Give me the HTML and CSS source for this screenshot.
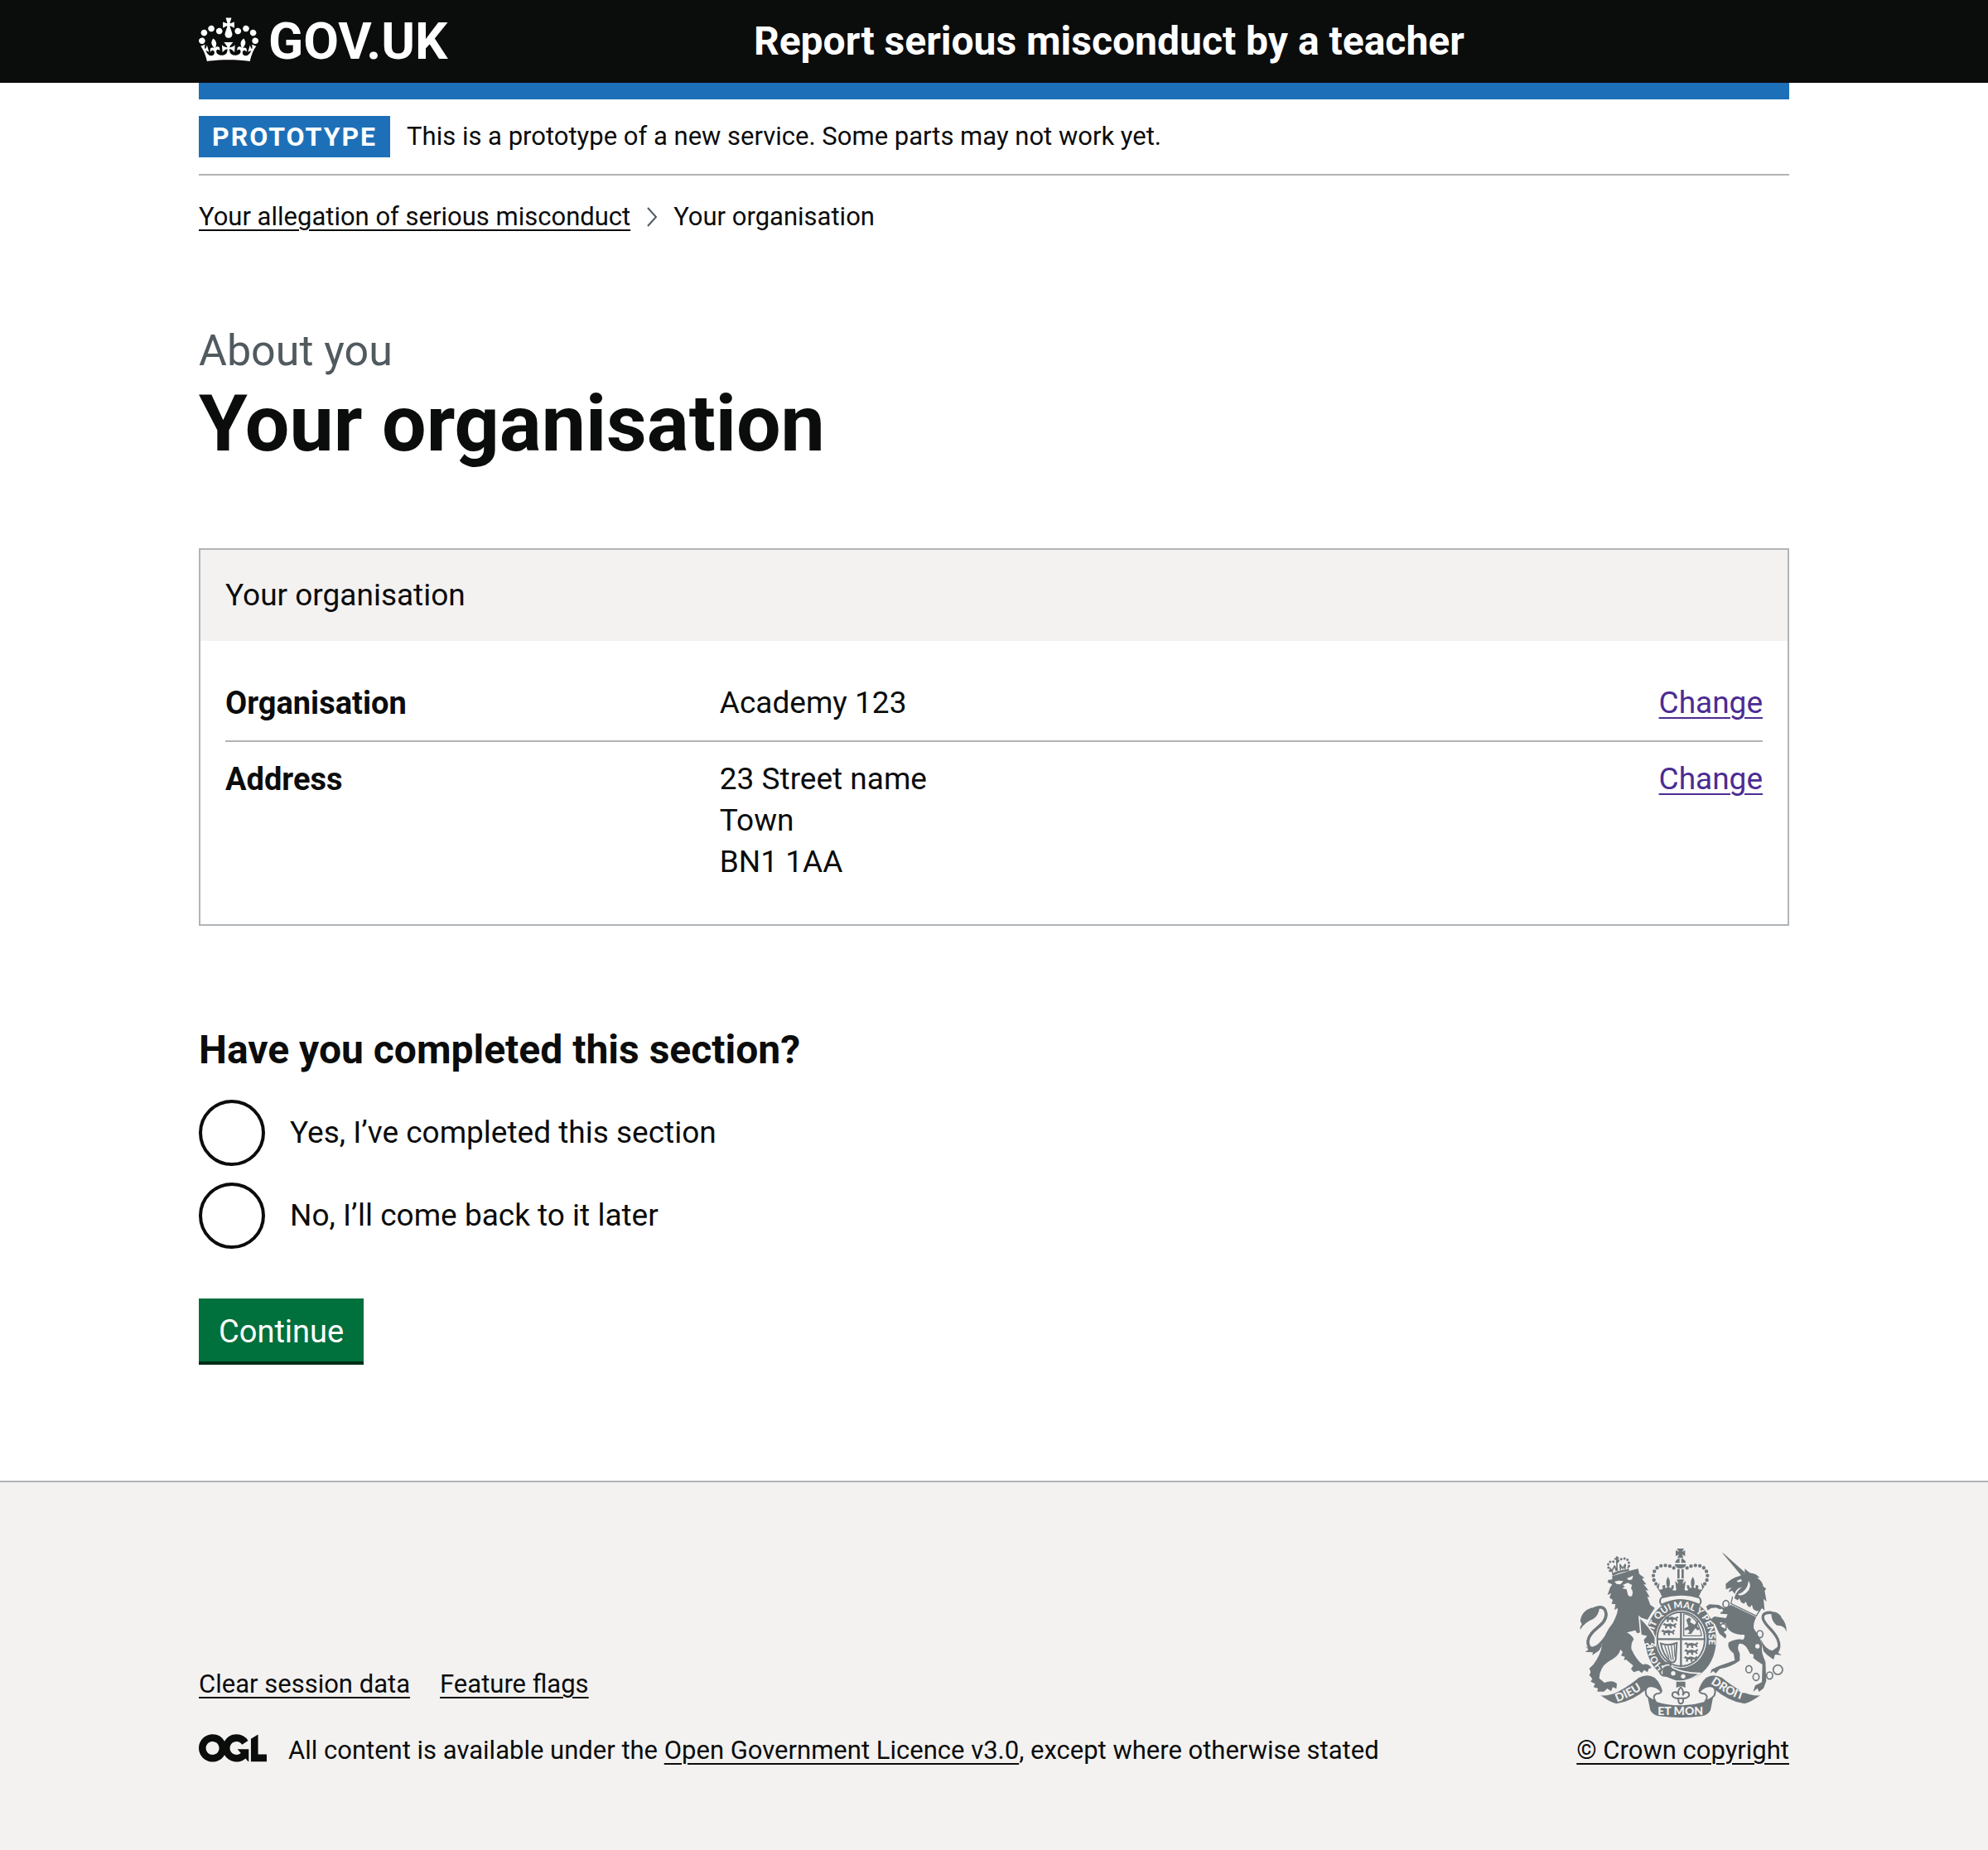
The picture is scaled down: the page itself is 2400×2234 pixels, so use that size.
FILE: index.html
```html
<!DOCTYPE html>
<html lang="en">
<head>
<meta charset="utf-8">
<meta name="viewport" content="width=device-width, initial-scale=1">
<title>Your organisation - Report serious misconduct by a teacher - GOV.UK</title>
<link rel="stylesheet" href="styles.css">
</head>
<body>
<header class="header">
  <div class="header-container container">
    <div class="header-logo">
      <a href="#" class="logo-link">
        <svg class="crown" viewBox="0 0 132 97" aria-hidden="true"><path fill="currentColor" fill-rule="evenodd" d="M25 30.2c3.5 1.5 7.7-.2 9.1-3.7 1.5-3.6-.2-7.8-3.9-9.2-3.6-1.4-7.6.3-9.1 3.9-1.4 3.5.3 7.5 3.9 9zM9 39.5c3.6 1.5 7.8-.2 9.2-3.7 1.5-3.6-.2-7.8-3.9-9.1-3.6-1.5-7.6.2-9.1 3.8-1.4 3.5.3 7.5 3.8 9zM4.4 57.2c3.5 1.5 7.7-.2 9.1-3.8 1.5-3.6-.2-7.7-3.9-9.1-3.5-1.5-7.6.3-9.1 3.8-1.4 3.5.3 7.6 3.9 9.1zm38.3-21.4c3.5 1.5 7.7-.2 9.1-3.8 1.5-3.6-.2-7.7-3.9-9.1-3.6-1.5-7.6.3-9.1 3.8-1.3 3.6.4 7.7 3.9 9.1zm64.4-5.6c-3.6 1.5-7.8-.2-9.1-3.7-1.5-3.6.2-7.8 3.8-9.2 3.6-1.4 7.7.3 9.2 3.9 1.3 3.5-.4 7.5-3.9 9zm15.9 9.3c-3.6 1.5-7.7-.2-9.1-3.7-1.5-3.6.2-7.8 3.7-9.1 3.6-1.5 7.7.2 9.2 3.8 1.5 3.5-.3 7.5-3.8 9zm4.7 17.7c-3.6 1.5-7.8-.2-9.2-3.8-1.5-3.6.2-7.7 3.9-9.1 3.6-1.5 7.7.3 9.2 3.8 1.3 3.5-.4 7.6-3.9 9.1zM89.3 35.8c-3.6 1.5-7.8-.2-9.2-3.8-1.4-3.6.2-7.7 3.9-9.1 3.6-1.5 7.7.3 9.2 3.8 1.4 3.6-.3 7.7-3.9 9.1zM69.7 17.7l8.9 4.7V9.3l-8.9 2.8c-.2-.3-.5-.6-.9-.9L72.4 0H59.6l3.5 11.2c-.3.3-.6.5-.9.9l-8.8-2.8v13.1l8.8-4.7c.3.3.6.7.9.9l-5 15.4v.1c-.2.8-.4 1.6-.4 2.4 0 4.1 3.1 7.5 7 8.1h.2c.3 0 .7.1 1 .1.4 0 .7 0 1-.1h.2c4-.6 7.1-4.1 7.1-8.1 0-.8-.1-1.7-.4-2.4V34l-5.1-15.4c.4-.2.7-.6 1-.9zM66 92.8c16.9 0 32.8 1.1 47.1 3.2 4-16.9 8.9-26.7 14-33.5l-9.6-3.4c1 4.9 1.1 7.2 0 10.2-1.5-1.4-3-4.3-4.2-8.7L108.6 76c2.8-2 5-3.2 7.5-3.3-4.4 9.4-10 11.9-13.6 11.2-4.3-.8-6.3-4.6-5.6-7.9 1-4.7 5.7-5.9 8-.5 4.3-8.7-3-11.4-7.6-8.8 7.1-7.2 7.9-13.5 2.1-21.1-8 6.1-8.1 12.3-4.5 20.8-4.7-5.4-12.1-2.5-9.5 6.2 3.4-5.2 7.9-2 7.2 3.1-.6 4.3-6.4 7.8-13.5 7.2-10.3-.9-10.9-8-11.2-13.8 2.5-.5 7.1 1.8 11 7.3L80.2 60c-4.1 4.4-8 5.3-12.3 5.4 1.4-4.4 8-11.6 8-11.6H55.5s6.4 7.2 7.9 11.6c-4.2-.1-8-1-12.3-5.4l1.4 16.4c3.9-5.5 8.5-7.7 10.9-7.3-.3 5.8-.9 12.8-11.1 13.8-7.2.6-12.9-2.9-13.5-7.2-.7-5 3.8-8.3 7.1-3.1 2.7-8.7-4.6-11.6-9.4-6.2 3.7-8.5 3.6-14.7-4.6-20.8-5.8 7.6-5 13.9 2.2 21.1-4.7-2.6-11.9.1-7.7 8.8 2.3-5.5 7.1-4.2 8.1.5.7 3.3-1.3 7.1-5.7 7.9-3.5.7-9-1.8-13.5-11.2 2.5.1 4.7 1.3 7.5 3.3l-4.7-15.4c-1.2 4.4-2.7 7.2-4.3 8.7-1.1-3-.9-5.3 0-10.2l-9.5 3.4c5 6.9 9.9 16.7 14 33.5 14.8-2.1 30.8-3.2 47.7-3.2z"/></svg>
        <span>GOV.UK</span>
      </a>
    </div>
    <a href="#" class="service-name">Report serious misconduct by a teacher</a>
  </div>
</header>

<div class="container page">
  <div class="phase-banner">
    <strong class="tag">PROTOTYPE</strong>
    <span>This is a prototype of a new service. Some parts may not work yet.</span>
  </div>
  <nav aria-label="Breadcrumb">
    <ol class="breadcrumbs">
      <li><a href="#">Your allegation of serious misconduct</a></li>
      <li>
        <svg class="chevron" viewBox="0 0 14 24" aria-hidden="true"><path d="M1 1l10 11L1 23" fill="none" stroke="currentColor" stroke-width="2"/></svg>
        <span aria-current="page">Your organisation</span>
      </li>
    </ol>
  </nav>

  <main class="main">
    <span class="caption">About you</span>
    <h1 class="heading">Your organisation</h1>

    <section class="card">
      <h2 class="card-title">Your organisation</h2>
      <dl class="summary">
        <div class="row">
          <dt>Organisation</dt>
          <dd class="value">Academy 123</dd>
          <dd><a href="#" class="change" aria-label="Change organisation">Change</a></dd>
        </div>
        <div class="row">
          <dt>Address</dt>
          <dd class="value">23 Street name<br>Town<br>BN1 1AA</dd>
          <dd><a href="#" class="change" aria-label="Change address">Change</a></dd>
        </div>
      </dl>
    </section>

    <form>
      <fieldset class="fieldset">
        <legend>Have you completed this section?</legend>
        <div class="radios">
          <div class="radio">
            <input type="radio" id="completed-yes" name="completed" value="yes">
            <label for="completed-yes">Yes, I’ve completed this section</label>
          </div>
          <div class="radio">
            <input type="radio" id="completed-no" name="completed" value="no">
            <label for="completed-no">No, I’ll come back to it later</label>
          </div>
        </div>
      </fieldset>
      <button type="submit" class="button">Continue</button>
    </form>
  </main>
</div>

<footer class="footer">
  <div class="container footer-container">
    <div class="footer-meta">
      <ul class="footer-links">
        <li><a href="#">Clear session data</a></li>
        <li><a href="#">Feature flags</a></li>
      </ul>
      <div class="licence">
        <svg class="ogl" viewBox="0 0 483 196" aria-hidden="true"><path fill="currentColor" d="M421.5 142.8V.1l-50.7 32.3v161.1h112.4v-50.7zm-122.3-9.6A47.12 47.12 0 0 1 221 97.8c0-26 21.1-47.1 47.1-47.1 16.7 0 31.4 8.7 39.7 21.8l42.7-27.2A97.63 97.63 0 0 0 268.1 0c-36.5 0-68.3 20.1-85.1 49.7A98 98 0 0 0 97.8 0C43.9 0 0 43.9 0 97.8s43.9 97.8 97.8 97.8c36.5 0 68.3-20.1 85.1-49.7a97.76 97.76 0 0 0 149.6 25.4l19.4 22.2h3v-87.8h-80l24.3 27.5zM97.8 145c-26 0-47.1-21.1-47.1-47.1s21.1-47.1 47.1-47.1 47.1 21.1 47.1 47.1S123.8 145 97.8 145"/></svg>
        <span>All content is available under the <a href="#">Open Government Licence v3.0</a>, except where otherwise stated</span>
      </div>
    </div>
    <a href="#" class="copyright">
      <svg class="crest" viewBox="72 60 750 612" aria-hidden="true">
        <defs>
          <path id="garter-text" d="M378 488C352 466 338 432 338 392C338 320 383 276 439 276C495 276 540 320 540 392C540 440 524 480 486 510"/>
          <path id="scroll-left" d="M208 616C255 598 290 578 335 542"/>
          <path id="scroll-right" d="M546 548C590 575 620 600 690 616"/>
          <g id="royal-lion"><path d="M0 8l8-7 6 5 14-3 12 4 8-6 4 5-6 4 4 8-6 1-4-6-8 1 2 8-7 0-2-8-8 0-1 8-7-1 1-10z"/></g>
          <g id="bezant"><ellipse rx="11" ry="13" fill="none" stroke="currentColor" stroke-width="5"/></g>
        </defs>
        <g fill="currentColor">
          <!-- lion -->
          <path d="M190 160L262 138L284 133L288 152L306 166L298 170L314 190L304 190L322 212L311 210L326 236L317 234L328 264L344 275Q332 292 318 318L288 308Q326 342 346 382L346 412L334 404L328 417L318 404L306 408L302 390L312 378L294 374L298 362L280 367L274 356L243 364Q262 374 268 388Q256 406 260 425Q278 464 300 480Q322 474 332 492L322 496L318 508L306 500L297 511L286 502L268 508L258 496L266 484L240 462L232 464L236 452L222 448L228 436L220 425Q215 450 175 470Q145 490 143 530L162 546Q192 534 207 550L205 568L192 562L186 577L172 567L160 578L136 578L138 566L122 562L128 550L112 542L118 532L107 518L112 508L107 494L122 480Q150 440 153 410Q160 370 192 330Q212 292 210 276L198 282L202 262L188 260L192 246L180 238L186 222L173 228L182 202L190 190L173 182L176 173L190 172Z"/>
          <path d="M188 150Q214 138 250 134L252 142Q215 146 192 159Z"/>
          <path d="M192 147L182 130M205 142L199 122M220 138L218 116M236 135L238 116M246 133L252 120M182 132L190 140L198 124L208 137L206 106L208 92M218 118L228 132L238 116" fill="none" stroke="currentColor" stroke-width="5"/>
          <path d="M182 140C168 118 176 102 200 108M212 104C230 90 256 92 250 128" fill="none" stroke="currentColor" stroke-width="9" stroke-linecap="round" stroke-dasharray="0 12"/>
          <path d="M198 98L214 94M206 88L210 112" stroke="currentColor" stroke-width="6"/>
          <path fill="none" stroke="currentColor" stroke-width="11" d="M112 292C125 270 164 260 168 296C170 340 108 352 102 395C100 430 130 435 168 380"/>
          <path d="M74 354Q72 345 80 334L74 322Q78 296 98 282Q122 268 144 276Q140 304 120 316Q92 326 74 354Z"/>
          <path d="M88 408Q100 425 125 418L156 408L142 430L118 446L120 436L92 434L104 426Z"/>
          <path class="paper" d="M198 180L212 176L230 178L220 190L206 188ZM243 168L266 158L262 172L250 175ZM228 192L246 184L262 192L258 204Q268 216 262 230Q254 238 247 228L242 208L226 204L236 198Z"/>

          <!-- crown -->
          <path d="M424 60L450 60L443 72L454 66L454 88L443 81L448 94L426 94L432 81L420 88L420 66L432 72Z"/>
          <path d="M418 112Q420 98 434 95L434 112ZM440 112L440 95Q455 98 457 112ZM416 117L458 117Q454 132 437 132Q420 132 416 117Z"/>
          <path d="M426 134L434 134L434 168L426 168ZM441 134L449 134L449 168L441 168Z"/>
          <path fill="none" stroke="currentColor" stroke-width="13" stroke-linecap="round" stroke-dasharray="0 16" d="M413 130C395 118 350 112 340 150C336 170 345 188 356 194"/>
          <path fill="none" stroke="currentColor" stroke-width="13" stroke-linecap="round" stroke-dasharray="0 16" d="M461 130C479 118 524 112 534 150C538 170 529 188 518 194"/>
          <path d="M350 198L362 184L358 206Q366 212 374 204Q366 192 382 192L382 204L390 200Q380 180 392 162Q404 180 396 200L404 204Q402 192 412 192Q416 202 408 210Q416 214 422 210L418 178L430 188L424 172L450 172L444 188L456 178L452 210Q458 214 466 210Q458 202 462 192Q472 192 470 204L478 200Q470 180 482 162Q494 180 484 200L492 204L492 192Q508 192 500 204Q508 212 516 206L512 184L524 198Q510 216 502 238Q437 218 372 238Q364 216 350 198Z"/>
          <path fill="none" stroke="currentColor" stroke-width="6" d="M368 238Q437 216 506 238Q516 250 506 264Q437 230 368 264Q358 250 368 238Z"/>

          <!-- garter and shield -->
          <path fill-rule="evenodd" d="M439 244A128 148 0 1 1 438 244ZM439 284A92 104 0 1 0 440 284Z"/>
          <ellipse cx="439" cy="388" rx="86" ry="98" fill="none" stroke="currentColor" stroke-width="6"/>
          <path d="M439 290V490M352 388H526" stroke="currentColor" stroke-width="7"/>
          <path fill="none" stroke="currentColor" stroke-width="4" d="M449 296V376H514M449 296Q500 304 514 376"/>
          <path d="M458 318l10-8 8 6-4 10 16 10 8-10-6-6 12 4-4 18 10 10-10 4-6-8-8 10-8 12-14-2 8-6-4-8-14 2 2-8 12-6z"/>
          <use href="#royal-lion" x="378" y="304"/><use href="#royal-lion" x="372" y="328"/><use href="#royal-lion" x="366" y="352"/>
          <use href="#royal-lion" x="450" y="398"/><use href="#royal-lion" x="450" y="423"/><use href="#royal-lion" x="448" y="448"/>
          <path fill="none" stroke="currentColor" stroke-width="6" d="M366 404Q392 414 424 402L420 462Q416 476 400 470Q372 440 366 404Z"/>
          <path fill="none" stroke="currentColor" stroke-width="4" d="M380 412L396 458M392 412L404 464M404 410L411 464M415 408L417 452"/>
          <text class="motto"><textPath href="#garter-text">HONI SOIT QUI MAL Y PENSE</textPath></text>
          <path d="M370 492Q395 470 410 492Q450 512 508 512Q470 544 420 540Q395 532 370 520Z" class="strap"/>
          <circle class="paper" cx="411" cy="512" r="8"/><circle class="paper" cx="447" cy="523" r="8"/>
          <path fill="none" stroke="currentColor" stroke-width="6" d="M392 520Q366 526 362 506Q376 500 362 484Q384 466 402 480Q396 492 406 498"/>
          <path class="outlined" d="M288 308Q326 342 346 382L346 412L334 404L328 417L318 404L306 408L302 390L312 378L294 374Z"/>

          <!-- pendant -->
          <path d="M422 542H455V564L439 558L422 564Z"/>
          <path fill="none" stroke="currentColor" stroke-width="6" d="M438 562Q452 576 445 592Q452 574 466 582Q474 596 456 602H446Q450 622 438 622Q428 622 430 602H420Q402 596 410 582Q424 574 432 592Q424 576 438 562ZM424 602H454"/>

          <!-- unicorn -->
          <path d="M588 75L594 78L672 148L658 158Z"/>
          <path d="M670 150L670 133L688 148Q712 150 724 166L714 166Q736 180 736 196L748 206L742 212L749 252L738 242L742 284L732 276L722 292L632 240Q640 212 660 200Q640 202 634 224L624 212L612 218L616 206L602 208L601 188Q625 166 650 160Z"/>
          <path class="paper" d="M640 178L656 170L660 178L648 182ZM684 176Q698 200 676 220Q655 236 645 226Q680 215 684 176ZM604 206L622 202L618 208Z"/>
          <path d="M620 264L712 308Q698 335 704 352Q732 390 733 415Q728 435 745 470L748 540L738 566L722 579L716 566L700 579L708 556L732 544L734 480Q692 455 688 438Q670 400 650 405Q640 420 652 440L652 466Q620 490 580 496L565 512L556 504L545 512L550 498L575 486L634 465L630 440Q604 420 612 400Q640 385 664 390Q672 382 668 372Q610 372 602 332L580 326L584 342L606 354L594 362L604 374L600 386L578 368L562 334L545 318L560 306L602 312L608 298L582 296L584 282L566 274L548 276L536 284L530 270L542 262L576 264L596 276Z"/>
          <path class="collar" d="M630 236L640 254L650 240L662 266L674 252L684 278L696 264L704 290L722 284L712 304L622 260Z"/>
          <path fill="none" stroke="currentColor" stroke-width="4" d="M626 234L620 259L712 304L724 284"/>
          <path fill="none" stroke="currentColor" stroke-width="10" d="M784 440C810 405 782 370 754 342C724 308 732 290 768 292"/>
          <path d="M760 290Q792 284 804 312Q822 330 821 362L816 350Q806 338 786 338Q768 326 766 298Z"/>
          <path d="M728 388Q745 426 770 430L797 410L786 434L804 446L780 444L774 462L752 446L738 432Z"/>
          <use href="#bezant" x="602" y="261"/><use href="#bezant" x="592" y="345"/><use href="#bezant" x="725" y="370"/>
          <use href="#bezant" x="685" y="497"/><use href="#bezant" x="711" y="525"/><use href="#bezant" x="760" y="520"/>
          <circle cx="790" cy="499" r="17" fill="none" stroke="currentColor" stroke-width="5"/>
          <circle class="paper" cx="716" cy="414" r="8"/><circle class="paper" cx="694" cy="449" r="8"/><circle class="paper" cx="585" cy="284" r="6"/>

          <!-- scroll -->
          <path d="M148 592Q182 594 212 578Q254 556 286 528Q318 512 344 528Q364 546 372 576L362 580Q344 560 318 566Q262 614 205 622Q184 618 148 592Z"/>
          <path d="M726 592Q692 594 662 578Q620 556 588 528Q556 512 530 528Q510 546 502 576L512 580Q530 560 556 566Q612 614 669 622Q690 618 726 592Z"/>
          <path d="M314 575Q320 602 346 614Q437 642 528 614Q554 602 560 575L546 646Q536 664 515 667Q437 677 359 667Q338 664 328 646Z"/>
          <path class="fold" d="M314 592Q304 562 328 558Q350 558 368 578Q364 586 350 586Q334 594 346 612Q326 606 314 592Z"/>
          <path class="fold" d="M560 592Q570 562 546 558Q524 558 506 578Q510 586 524 586Q540 594 528 612Q548 606 560 592Z"/>
          <text class="scroll-text"><textPath href="#scroll-left">DIEU</textPath></text>
          <text class="scroll-text"><textPath href="#scroll-right">DROIT</textPath></text>
          <text class="scroll-text scroll-centre" x="437" y="662">ET MON</text>
        </g>
      </svg>
      <span>© Crown copyright</span>
    </a>
  </div>
</footer>
</body>
</html>
```
FILE: styles.css
```css
:root {
  --black: #0b0c0c;
  --blue: #1d70b8;
  --border: #b1b4b6;
  --grey: #f3f2f1;
  --visited: #4c2c92;
}

* {
  box-sizing: border-box;
}

body {
  margin: 0;
  background: #fff;
  color: var(--black);
  font-family: Roboto, "Liberation Sans", sans-serif;
  font-size: 37px;
  line-height: 50px;
}

.container {
  max-width: 1920px;
  margin: 0 auto;
}

a {
  color: inherit;
  text-decoration: underline;
  text-decoration-thickness: 2px;
  text-underline-offset: 5px;
}

ol,
ul,
dl,
dd {
  margin: 0;
  padding: 0;
  list-style: none;
}

/* Header */
.header {
  background: var(--black);
  color: #fff;
}

.header-container {
  display: flex;
  align-items: center;
  min-height: 100px;
}

.header-logo {
  flex: 0 0 calc(33.33% + 30px);
}

.logo-link {
  display: flex;
  align-items: center;
  gap: 12px;
  font-size: 62px;
  font-weight: 700;
  line-height: 60px;
  text-decoration: none;
}

.crown {
  width: 72px;
  height: 54px;
  margin-bottom: 4px;
}

.service-name {
  font-size: 48px;
  font-weight: 700;
  line-height: 60px;
  text-decoration: none;
}

.page {
  border-top: 20px solid var(--blue);
}

/* Phase banner */
.phase-banner {
  display: flex;
  align-items: center;
  gap: 20px;
  padding: 20px 0;
  border-bottom: 2px solid var(--border);
  font-size: 31px;
}

.tag {
  padding: 0 16px;
  background: var(--blue);
  color: #fff;
  font-size: 32px;
  letter-spacing: 2px;
}

/* Breadcrumbs */
.breadcrumbs {
  display: flex;
  gap: 20px;
  padding-top: 30px;
  font-size: 31px;
  line-height: 40px;
}

.breadcrumbs li {
  display: flex;
  align-items: center;
  gap: 18px;
}

.chevron {
  width: 14px;
  height: 24px;
  color: #505a5f;
}

/* Main */
.main {
  padding: 112px 0 140px;
}

.caption {
  display: block;
  color: #505a5f;
  font-size: 52px;
  line-height: 60px;
}

.heading {
  margin: 8px 0 100px;
  font-size: 95px;
  line-height: 100px;
}

.card {
  margin-bottom: 120px;
  border: 2px solid var(--border);
}

.card-title {
  margin: 0;
  padding: 30px;
  background: var(--grey);
  font-size: 37px;
  font-weight: 400;
}

.summary {
  padding: 30px;
}

.row {
  display: flex;
  padding: 20px 0;
  border-bottom: 2px solid var(--border);
}

.row:last-child {
  border-bottom: 0;
}

.row dt {
  flex: 0 0 calc(30% + 40px);
  font-size: 38px;
  font-weight: 700;
}

.value {
  flex: 1;
}

.change {
  color: var(--visited);
}

.fieldset {
  margin: 0 0 60px;
  padding: 0;
  border: 0;
}

.fieldset legend {
  margin-bottom: 30px;
  padding: 0;
  font-size: 48px;
  font-weight: 700;
  line-height: 60px;
}

.radios {
  display: grid;
  gap: 20px;
}

.radio {
  display: flex;
  align-items: center;
  gap: 30px;
}

.radio input {
  appearance: none;
  width: 80px;
  height: 80px;
  margin: 0;
  border: 4px solid var(--black);
  border-radius: 50%;
  background: #fff;
}

.radio input:checked {
  background: radial-gradient(circle, var(--black) 20px, #fff 21px);
}

.button {
  display: block;
  padding: 15px 24px 11px;
  border: 0;
  border-bottom: 4px solid #002d18;
  background: #00703c;
  color: #fff;
  font: inherit;
  font-size: 38px;
}

/* Footer */
.footer {
  padding: 80px 0 100px;
  border-top: 2px solid var(--border);
  background: var(--grey);
  font-size: 31px;
  line-height: 40px;
}

.footer-container {
  display: flex;
  align-items: flex-end;
  justify-content: space-between;
}

.footer-links {
  display: flex;
  gap: 36px;
  margin-bottom: 40px;
}

.licence {
  display: flex;
  gap: 26px;
}

.ogl {
  width: 82px;
  height: 34px;
}

.copyright {
  display: flex;
  flex-direction: column;
  align-items: center;
  gap: 20px;
}

/* Coat of arms */
.crest {
  width: 250px;
  height: 204px;
  color: #6f777b;
}

.paper {
  fill: var(--grey);
}

.strap,
.outlined {
  stroke: var(--grey);
  stroke-width: 5px;
}

.collar {
  fill: var(--grey);
}

.fold {
  fill: var(--grey);
  stroke: currentColor;
  stroke-width: 6px;
}

.motto,
.scroll-text {
  fill: var(--grey);
  font-family: Lato, sans-serif;
  font-size: 34px;
  font-weight: 900;
}

.scroll-text {
  font-size: 42px;
}

.scroll-centre {
  text-anchor: middle;
}
```
